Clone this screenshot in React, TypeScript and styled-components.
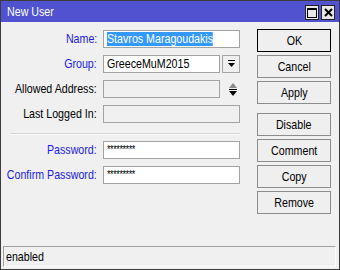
import React from "react";
import styled, { createGlobalStyle } from "styled-components";

const GlobalStyle = createGlobalStyle`
  html, body {
    margin: 0;
    padding: 0;
    background: #f0f0f0;
  }
  body {
    font-family: "Liberation Sans", Arial, sans-serif;
    font-size: 13px;
    color: #000;
  }
`;

// the dialog uses a narrow face; squeeze Liberation Sans to match its widths
const Narrow = styled.span<{ $origin?: string }>`
  display: inline-block;
  white-space: nowrap;
  transform: scaleX(0.82);
  transform-origin: ${(p) => p.$origin || "left"} center;
`;

const Frame = styled.div`
  width: 340px;
  height: 270px;
  box-sizing: border-box;
  border: 1px solid #3c3c3c;
  background: #f0f0f0;
  display: flex;
  flex-direction: column;
`;

const TitleBar = styled.div`
  height: 21px;
  flex: none;
  background: #5052cf;
  display: flex;
  align-items: center;
  justify-content: space-between;
  padding: 0 4px 0 6px;
`;

const TitleText = styled.div`
  color: #fff;
  font-size: 13px;
`;

const TitleButtons = styled.div`
  display: flex;
  gap: 2px;
  margin-top: 2px;
`;

const TitleButton = styled.div`
  width: 14px;
  height: 15px;
  box-sizing: border-box;
  border: 1px solid #222;
  background: #e6e6e6;
  display: flex;
  align-items: center;
  justify-content: center;
`;

const Body = styled.div`
  flex: 1;
  display: flex;
  padding: 8px 8px 0 9px;
`;

const Form = styled.div`
  display: grid;
  grid-template-columns: 87px 137px;
  grid-template-rows: 18px 18px 18px 18px 4px 18px 18px;
  column-gap: 6px;
  row-gap: 7px;
  align-content: start;
`;

const Label = styled.div<{ $accent?: boolean }>`
  display: flex;
  justify-content: flex-end;
  align-items: center;
  line-height: 18px;
  color: ${(p) => (p.$accent ? "#1c1ce6" : "#000")};
`;

const FieldRow = styled.div`
  display: flex;
  align-items: center;
  gap: 2px;
`;

const Field = styled.div<{ $disabled?: boolean }>`
  flex: 1;
  height: 18px;
  box-sizing: border-box;
  border: 1px solid #a3a3a3;
  background: ${(p) => (p.$disabled ? "#f0f0f0" : "#fff")};
  padding: 0 3px;
  line-height: 16px;
  white-space: nowrap;
  overflow: hidden;
`;

const Selected = styled(Narrow)`
  background: #3399ff;
  color: #fff;
  line-height: 14px;
  vertical-align: middle;
  margin-top: -1px;
`;

const Masked = styled(Narrow)`
  font-size: 11px;
  letter-spacing: -0.5px;
  vertical-align: top;
  margin-top: -1px;
`;

const DropButton = styled.div`
  width: 18px;
  height: 18px;
  box-sizing: border-box;
  border: 1px solid #a3a3a3;
  background: #f0f0f0;
  display: flex;
  align-items: center;
  justify-content: center;
`;

const SpinSlot = styled.div`
  width: 18px;
  height: 18px;
  display: flex;
  align-items: center;
  justify-content: center;
  padding-left: 4px;
  box-sizing: border-box;
`;

const Separator = styled.div`
  grid-column: 1 / -1;
  align-self: start;
  height: 1px;
  margin-top: 3px;
  background: #d6d6d6;
  border-bottom: 1px solid #fafafa;
`;

const ButtonColumn = styled.div`
  margin-left: auto;
  width: 74px;
  display: flex;
  flex-direction: column;
  gap: 3px;
  margin-top: -1px;
`;

const ActionButton = styled.div<{ $primary?: boolean; $spaced?: boolean }>`
  height: 23px;
  box-sizing: border-box;
  border: 1px solid ${(p) => (p.$primary ? "#000" : "#8c8c8c")};
  background: #efefef;
  display: flex;
  align-items: center;
  justify-content: center;
  margin-top: ${(p) => (p.$spaced ? "6px" : "0")};
`;

const StatusBar = styled.div`
  flex: none;
  height: 21px;
  box-sizing: border-box;
  margin: 0 3px 2px 2px;
  border-top: 1px solid #a0a0a0;
  border-left: 1px solid #a0a0a0;
  border-right: 1px solid #fcfcfc;
  border-bottom: 1px solid #fcfcfc;
  padding: 0 2px;
  line-height: 19px;
`;

const MaxIcon = () => (
  <svg width="10" height="10" viewBox="0 0 10 10">
    <rect x="0.5" y="0.5" width="9" height="9" fill="none" stroke="#000" />
    <rect x="0" y="0" width="10" height="2" fill="#000" />
  </svg>
);

const CloseIcon = () => (
  <svg width="9" height="9" viewBox="0 0 9 9">
    <path d="M1 1 L8 8 M8 1 L1 8" stroke="#000" strokeWidth="2" />
  </svg>
);

const DropIcon = () => (
  <svg width="7" height="8" viewBox="0 0 7 8">
    <rect x="0" y="0" width="7" height="1" fill="#000" />
    <polygon points="0,3 7,3 3.5,7" fill="#000" />
  </svg>
);

const SpinIcon = () => (
  <svg width="8" height="13" viewBox="0 0 8 13">
    <polygon points="4,0 8,5 0,5" fill="#8a8a8a" />
    <rect x="0" y="6" width="8" height="1" fill="#000" />
    <polygon points="0,8 8,8 4,13" fill="#000" />
  </svg>
);

const buttons = ["OK", "Cancel", "Apply", "Disable", "Comment", "Copy", "Remove"];

export default function App() {
  return (
    <>
      <GlobalStyle />
      <Frame>
        <TitleBar>
          <TitleText>
            <Narrow>New User</Narrow>
          </TitleText>
          <TitleButtons>
            <TitleButton>
              <MaxIcon />
            </TitleButton>
            <TitleButton>
              <CloseIcon />
            </TitleButton>
          </TitleButtons>
        </TitleBar>
        <Body>
          <Form>
            <Label $accent>
              <Narrow $origin="right">Name:</Narrow>
            </Label>
            <Field>
              <Selected>Stavros Maragoudakis</Selected>
            </Field>

            <Label $accent>
              <Narrow $origin="right">Group:</Narrow>
            </Label>
            <FieldRow>
              <Field>
                <Narrow>GreeceMuM2015</Narrow>
              </Field>
              <DropButton>
                <DropIcon />
              </DropButton>
            </FieldRow>

            <Label>
              <Narrow $origin="right">Allowed Address:</Narrow>
            </Label>
            <FieldRow>
              <Field $disabled />
              <SpinSlot>
                <SpinIcon />
              </SpinSlot>
            </FieldRow>

            <Label>
              <Narrow $origin="right">Last Logged In:</Narrow>
            </Label>
            <Field $disabled />

            <Separator />

            <Label $accent>
              <Narrow $origin="right">Password:</Narrow>
            </Label>
            <Field>
              <Masked>*********</Masked>
            </Field>

            <Label $accent>
              <Narrow $origin="right">Confirm Password:</Narrow>
            </Label>
            <Field>
              <Masked>*********</Masked>
            </Field>
          </Form>
          <ButtonColumn>
            {buttons.map((b) => (
              <ActionButton key={b} $primary={b === "OK"} $spaced={b === "Disable"}>
                <Narrow $origin="center">{b}</Narrow>
              </ActionButton>
            ))}
          </ButtonColumn>
        </Body>
        <StatusBar>
          <Narrow>enabled</Narrow>
        </StatusBar>
      </Frame>
    </>
  );
}
